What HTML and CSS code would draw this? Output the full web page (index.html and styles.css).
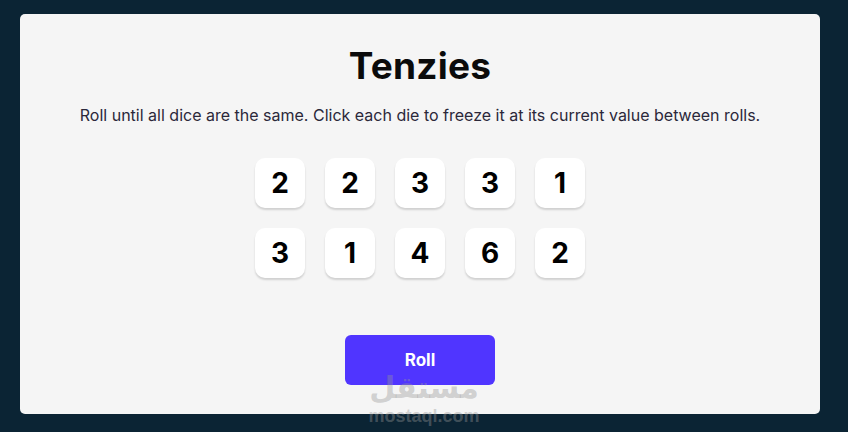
FILE: index.html
```html
<!DOCTYPE html>
<html>
<head>
<meta charset="utf-8">
<link rel="stylesheet" href="styles.css">
</head>
<body>
<main class="card">
  <h1 class="title">Tenzies</h1>
  <p class="instructions">Roll until all dice are the same. Click each die to freeze it at its current value between rolls.</p>
  <div class="dice">
    <button class="die">2</button>
    <button class="die">2</button>
    <button class="die">3</button>
    <button class="die">3</button>
    <button class="die">1</button>
    <button class="die">3</button>
    <button class="die">1</button>
    <button class="die">4</button>
    <button class="die">6</button>
    <button class="die">2</button>
  </div>
  <button class="roll">Roll</button>
</main>
<div class="watermark">
  <span class="wm-ar">مستقل</span>
  <span class="wm-en">mostaql.com</span>
</div>
</body>
</html>
```

FILE: styles.css
```css
html, body {
  margin: 0;
  padding: 0;
}
body {
  background: #0B2434;
  width: 848px;
  height: 432px;
  padding: 14px 28px 18px 20px;
  box-sizing: border-box;
  font-family: Inter, "Noto Sans", sans-serif;
  position: relative;
  overflow: hidden;
}
.card {
  width: 800px;
  height: 400px;
  background: #F5F5F5;
  border-radius: 5px;
  display: flex;
  flex-direction: column;
  align-items: center;
  box-sizing: border-box;
  padding-top: 31px;
}
.title {
  margin: 0;
  font-size: 37px;
  font-weight: 700;
  color: #0B0B0B;
  letter-spacing: 0.2px;
  line-height: 42px;
}
.instructions {
  margin: 18px 0 0;
  font-size: 16px;
  line-height: 20px;
  color: #2B283A;
  text-align: center;
}
.dice {
  margin-top: 33px;
  display: grid;
  grid-template-columns: repeat(5, 50px);
  grid-auto-rows: 50px;
  gap: 20px;
}
.die {
  width: 50px;
  height: 50px;
  border: none;
  border-radius: 10px;
  background: #FFFFFF;
  box-shadow: 0 2px 2px rgba(0, 0, 0, 0.15);
  font-family: Inter, sans-serif;
  font-size: 28px;
  font-weight: 700;
  color: #000;
  padding: 0;
  display: flex;
  align-items: center;
  justify-content: center;
}
.roll {
  margin-top: 57px;
  width: 150px;
  height: 50px;
  border: none;
  border-radius: 6px;
  background: #5035FF;
  color: #FFFFFF;
  font-family: Inter, sans-serif;
  font-size: 17px;
  font-weight: 700;
}
.watermark {
  position: absolute;
  left: 424px;
  top: 372px;
  transform: translateX(-50%);
  display: flex;
  flex-direction: column;
  align-items: center;
  gap: 4px;
  color: rgba(150, 150, 150, 0.4);
  pointer-events: none;
}
.wm-ar {
  font-family: "Noto Sans", "DejaVu Sans", sans-serif;
  font-size: 30px;
  font-weight: 700;
  line-height: 30px;
}
.wm-en {
  font-family: "Liberation Sans", sans-serif;
  font-size: 18px;
  font-weight: 700;
  line-height: 20px;
}
```
